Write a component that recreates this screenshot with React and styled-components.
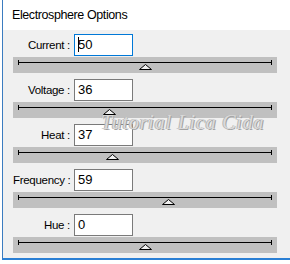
import React from 'react'
import styled, { createGlobalStyle } from 'styled-components'

const GlobalStyle = createGlobalStyle`
  html, body {
    margin: 0;
    padding: 0;
    background: #ffffff;
  }
`

const Screen = styled.div`
  width: 290px;
  height: 264px;
  background: #ffffff;
  overflow: hidden;
`

const Frame = styled.div`
  position: relative;
  margin-left: 2px;
  width: 288px;
  border-left: 1px solid #3b7cc0;
  border-bottom: 2px solid #2a7fd4;
  display: flex;
  flex-direction: column;
`

const Header = styled.div`
  height: 30px;
  display: flex;
  align-items: center;
  padding-left: 9px;
  background: #ffffff;
  font-family: 'Liberation Sans', Arial, sans-serif;
  font-size: 12.5px;
  letter-spacing: -0.4px;
  color: #000;
`

const Panel = styled.div`
  position: relative;
  height: 228px;
  background: #f0f0f0;
  padding: 4px 0 0 10px;
  box-sizing: border-box;
  display: flex;
  flex-direction: column;
  gap: 6px;
`

const Row = styled.div`
  display: flex;
  flex-direction: column;
  gap: 1px;
`

const Field = styled.div`
  display: flex;
  align-items: center;
  height: 22px;
  gap: 4px;
`

const Label = styled.div`
  width: 57px;
  text-align: right;
  font-family: 'Liberation Sans', Arial, sans-serif;
  font-size: 11.5px;
  letter-spacing: -0.3px;
  color: #000;
  white-space: nowrap;
`

const Input = styled.div`
  width: 59px;
  height: 22px;
  box-sizing: border-box;
  border: 1px solid ${p => (p.$focused ? '#0078d7' : '#7a7a7a')};
  background: #fff;
  padding: 2px 0 0 3px;
  font-family: 'Liberation Sans', Arial, sans-serif;
  font-size: 13px;
  color: #000;
  display: flex;
  align-items: flex-start;
`

const Caret = styled.span`
  display: inline-block;
  width: 1px;
  height: 15px;
  background: #000;
  margin-right: -1px;
`

const Track = styled.div`
  position: relative;
  width: 264px;
  height: 16px;
  background: #c0c0c0;
`

const Line = styled.div`
  position: absolute;
  left: 5px;
  right: 5px;
  top: 5px;
  height: 1px;
  background: #000;

  &::before,
  &::after {
    content: '';
    position: absolute;
    top: -2px;
    width: 1px;
    height: 5px;
    background: #000;
  }
  &::before { left: 0; }
  &::after { right: 0; }
`

const Thumb = styled.svg`
  position: absolute;
  top: 7px;
  width: 13px;
  height: 6px;
  margin-left: -6px;
`

const Watermark = styled.div`
  position: absolute;
  left: 98px;
  top: 81px;
  font-family: 'Liberation Serif', serif;
  font-style: italic;
  font-size: 20px;
  color: #dadada;
  text-shadow: 1px 1px 0 #a3a3a3, -1px 0 0 #b5b5b5;
  letter-spacing: 0.8px;
  pointer-events: none;
`

const sliders = [
  { label: 'Current :', value: '50', pos: 0.5, focused: true },
  { label: 'Voltage :', value: '36', pos: 0.36 },
  { label: 'Heat :', value: '37', pos: 0.37 },
  { label: 'Frequency :', value: '59', pos: 0.59 },
  { label: 'Hue :', value: '0', pos: 0.5 },
]

const LINE_LEN = 254

const Slider = ({ label, value, pos, focused }) => (
  <Row>
    <Field>
      <Label>{label}</Label>
      <Input $focused={focused}>
        {focused && <Caret />}
        {value}
      </Input>
    </Field>
    <Track>
      <Line />
      <Thumb style={{ left: 5 + Math.round(pos * LINE_LEN) }} viewBox="0 0 13 6">
        <path d="M6.5 0.5 L12.5 5.5 L0.5 5.5 Z" fill="#f0f0f0" stroke="#000" strokeWidth="1" />
      </Thumb>
    </Track>
  </Row>
)

const App = () => (
  <Screen>
    <GlobalStyle />
    <Frame>
      <Header>Electrosphere Options</Header>
      <Panel>
        {sliders.map(s => (
          <Slider key={s.label} {...s} />
        ))}
        <Watermark>Tutorial Lica Cida</Watermark>
      </Panel>
    </Frame>
  </Screen>
)

export default App
